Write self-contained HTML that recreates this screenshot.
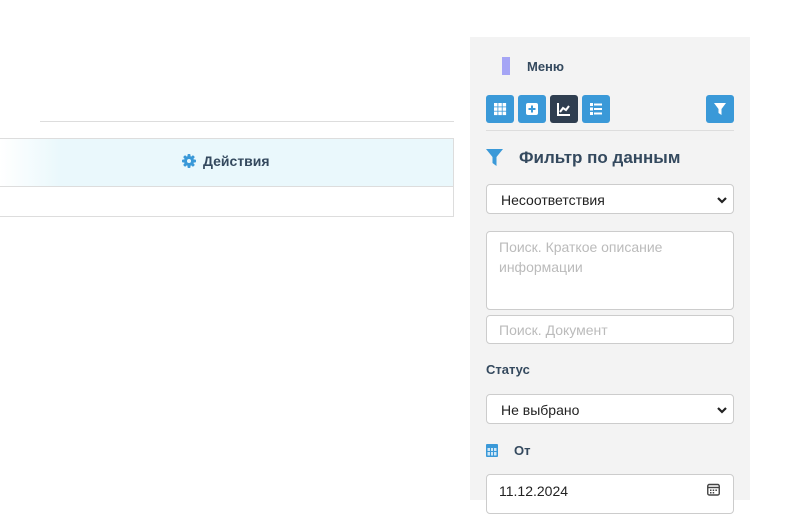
<!DOCTYPE html><html><head><meta charset="utf-8"><style>
body{margin:0;width:800px;height:500px;background:#fff;font-family:"Liberation Sans","DejaVu Sans",sans-serif;position:relative;overflow:hidden}
.a{position:absolute}
.panel{left:470px;top:37px;width:280px;height:463px;background:#f3f3f3}
.btn{width:28px;height:28px;background:#3a99d8;border-radius:3px;top:95px}
.inp{left:486px;width:248px;background:#fff;border:1px solid #ccc;border-radius:4px;font-size:14px;color:#222;box-sizing:border-box}
.lbl{font-weight:bold;color:#34495e;font-size:13px}
.chev{position:absolute;right:5px;top:11px}
</style></head><body>
<div class="a" style="left:40px;top:121px;width:414px;height:1px;background:#ddd"></div>
<div class="a" style="left:0;top:138px;width:454px;height:49px;background:linear-gradient(90deg,#fff 0,#eaf8fc 60px);border-top:1px solid #ddd;border-bottom:1px solid #ddd;border-right:1px solid #ddd;box-sizing:border-box"></div>
<div class="a" style="left:0;top:186px;width:454px;height:31px;border-right:1px solid #ddd;border-bottom:1px solid #ddd;box-sizing:border-box"></div>
<svg class="a" style="left:182px;top:154px" width="14" height="14" viewBox="0 0 14 14"><g fill="#3a99d8"><circle cx="7" cy="7" r="5"/><rect x="5.5" y="0" width="3" height="14" rx="1"/><rect x="0" y="5.5" width="14" height="3" rx="1"/><rect x="5.5" y="0" width="3" height="14" rx="1" transform="rotate(45 7 7)"/><rect x="5.5" y="0" width="3" height="14" rx="1" transform="rotate(-45 7 7)"/></g><circle cx="7" cy="7" r="2" fill="#eaf8fc"/></svg>
<div class="a" style="left:203px;top:153px;font-size:14px;font-weight:bold;color:#34495e">Действия</div>
<div class="a panel"></div>
<div class="a" style="left:502px;top:57px;width:8px;height:18px;background:#a5a5f5"></div>
<div class="a lbl" style="left:527px;top:59px">Меню</div>
<div class="a btn" style="left:486px"><svg width="28" height="28"><g fill="#fff"><rect x="8" y="8" width="3.5" height="3.5"/><rect x="12.3" y="8" width="3.5" height="3.5"/><rect x="16.6" y="8" width="3.5" height="3.5"/><rect x="8" y="12.3" width="3.5" height="3.5"/><rect x="12.3" y="12.3" width="3.5" height="3.5"/><rect x="16.6" y="12.3" width="3.5" height="3.5"/><rect x="8" y="16.6" width="3.5" height="3.5"/><rect x="12.3" y="16.6" width="3.5" height="3.5"/><rect x="16.6" y="16.6" width="3.5" height="3.5"/></g></svg></div>
<div class="a btn" style="left:518px"><svg width="28" height="28"><rect x="8" y="8" width="12" height="12" rx="2" fill="#fff"/><path d="M14 10.5v7M10.5 14h7" stroke="#3a99d8" stroke-width="2"/></svg></div>
<div class="a btn" style="left:550px;background:#2f3e50"><svg width="28" height="28"><path d="M8 8v12h12" stroke="#fff" stroke-width="2" fill="none"/><path d="M10 17l3-4 3 2 3-4" stroke="#fff" stroke-width="2" fill="none"/></svg></div>
<div class="a btn" style="left:582px"><svg width="28" height="28"><g fill="#fff"><rect x="8" y="8" width="3" height="3"/><rect x="12" y="8.5" width="8" height="2"/><rect x="8" y="12.5" width="3" height="3"/><rect x="12" y="13" width="8" height="2"/><rect x="8" y="17" width="3" height="3"/><rect x="12" y="17.5" width="8" height="2"/></g></svg></div>
<div class="a btn" style="left:706px"><svg width="28" height="28"><path d="M8 8h12l-4.5 6v6l-3-2v-4z" fill="#fff"/></svg></div>
<div class="a" style="left:486px;top:130px;width:248px;height:1px;background:#ddd"></div>
<svg class="a" style="left:486px;top:149px" width="17" height="17"><path d="M0 0h17l-6.5 8v9l-4-3v-6z" fill="#3a99d8"/></svg>
<div class="a" style="left:519px;top:148px;font-size:17px;font-weight:bold;color:#34495e">Фильтр по данным</div>
<div class="a inp" style="top:184px;height:30px;padding:7px 14px">Несоответствия<svg class="chev" width="12" height="8"><path d="M2 2l4 4 4-4" stroke="#222" stroke-width="2.2" fill="none"/></svg></div>
<div class="a inp" style="top:231px;height:79px;padding:5px 12px;color:#bbb;line-height:20px">Поиск. Краткое описание информации</div>
<div class="a inp" style="top:315px;height:29px;padding:6px 12px;color:#bbb">Поиск. Документ</div>
<div class="a lbl" style="left:486px;top:362px">Статус</div>
<div class="a inp" style="top:394px;height:30px;padding:7px 14px">Не выбрано<svg class="chev" width="12" height="8"><path d="M2 2l4 4 4-4" stroke="#222" stroke-width="2.2" fill="none"/></svg></div>
<svg class="a" style="left:486px;top:443px" width="12" height="14"><rect x="0" y="1" width="12" height="13" rx="1" fill="#3a99d8"/><rect x="1.5" y="5" width="9" height="7.5" fill="#cfe7f7"/><path d="M4.5 5v8M7.5 5v8M1.5 8.5h9" stroke="#3a99d8"/></svg>
<div class="a lbl" style="left:514px;top:443px">От</div>
<div class="a inp" style="top:474px;height:40px;padding:8px 12px">11.12.2024<svg style="position:absolute;right:13px;top:8px" width="13" height="13"><rect x="0.75" y="1.5" width="11.5" height="10.5" rx="1.5" stroke="#444" stroke-width="1.4" fill="none"/><path d="M1 4.5h11" stroke="#444" stroke-width="1.4"/><g fill="#444"><rect x="3" y="6.5" width="1.5" height="1.5"/><rect x="5.7" y="6.5" width="1.5" height="1.5"/><rect x="8.4" y="6.5" width="1.5" height="1.5"/><rect x="3" y="9" width="1.5" height="1.5"/><rect x="5.7" y="9" width="1.5" height="1.5"/></g></svg></div>
</body></html>
